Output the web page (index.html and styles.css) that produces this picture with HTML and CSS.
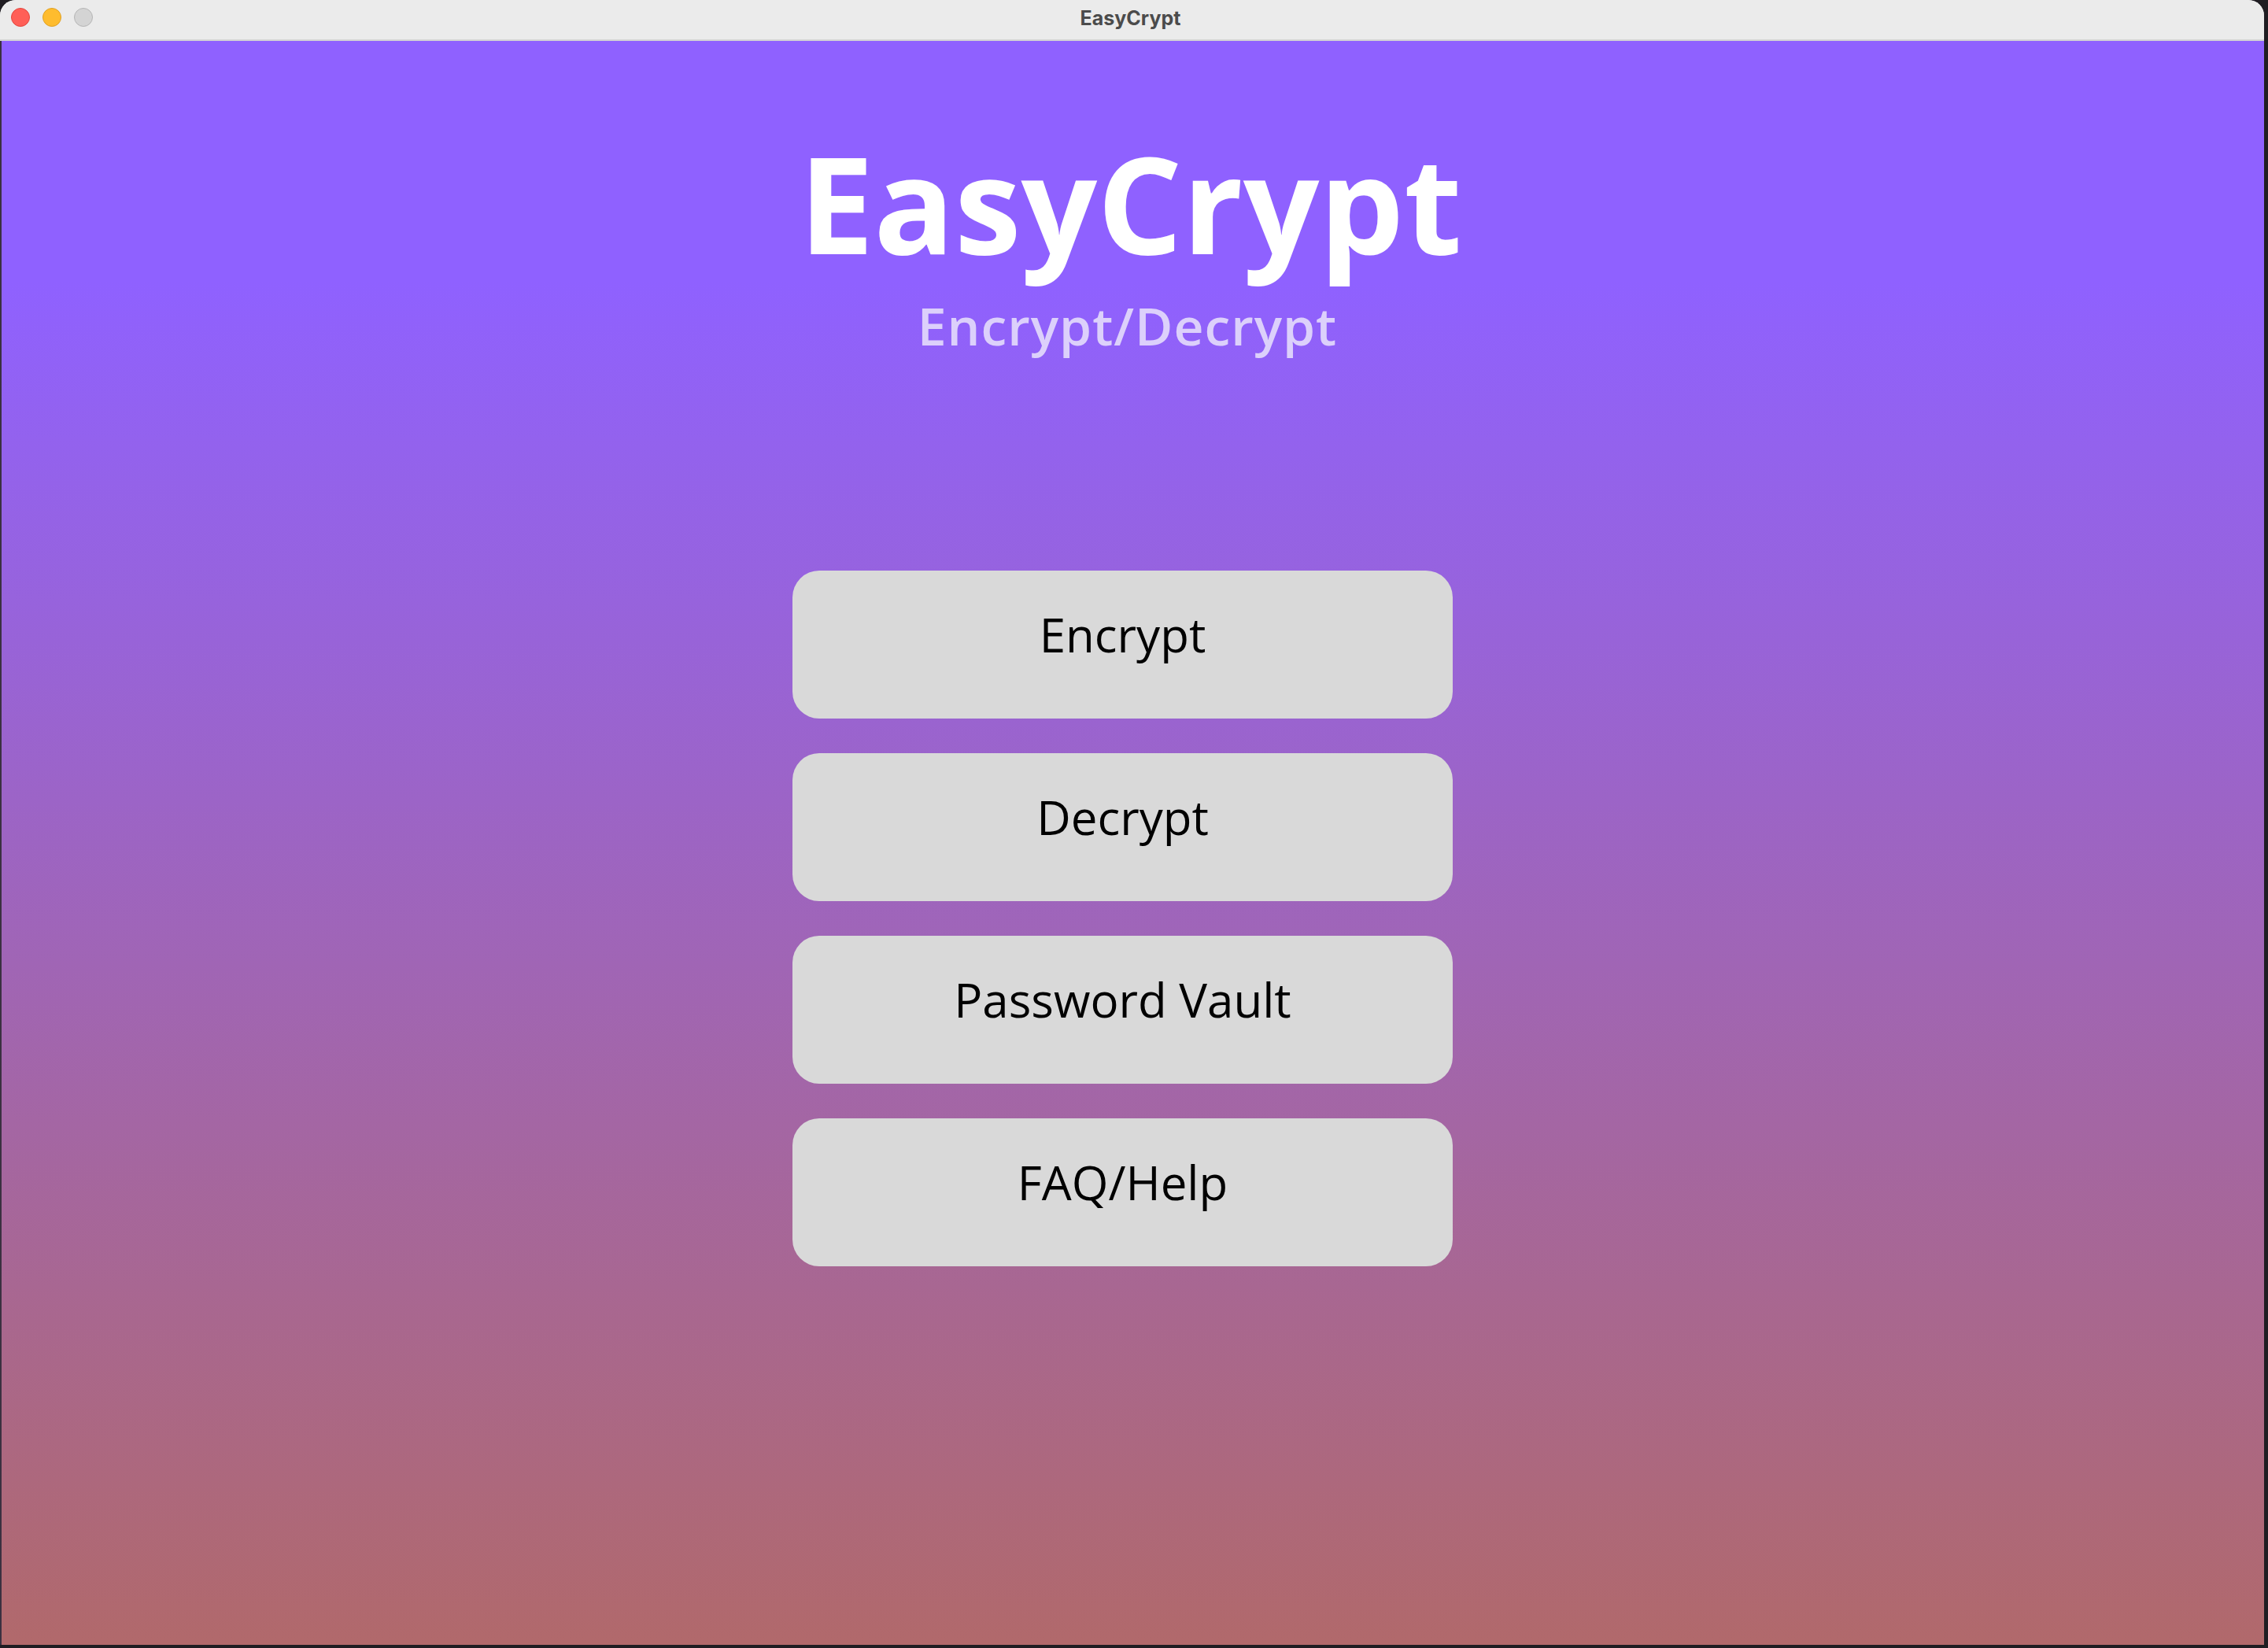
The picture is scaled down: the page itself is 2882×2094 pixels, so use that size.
FILE: index.html
```html
<!DOCTYPE html>
<html lang="en">
<head>
<meta charset="utf-8">
<title>EasyCrypt</title>
<link rel="stylesheet" href="styles.css">
</head>
<body>
<div class="window">
  <header class="titlebar">
    <div class="lights">
      <span class="light red"></span>
      <span class="light yellow"></span>
      <span class="light gray"></span>
    </div>
    <div class="wintitle">EasyCrypt</div>
  </header>
  <main class="content">
    <h1 class="title">EasyCrypt</h1>
    <p class="subtitle">Encrypt/Decrypt</p>
    <nav class="menu">
      <button class="btn">Encrypt</button>
      <button class="btn">Decrypt</button>
      <button class="btn">Password Vault</button>
      <button class="btn">FAQ/Help</button>
    </nav>
  </main>
</div>
</body>
</html>
```

FILE: styles.css
```css
html, body {
  margin: 0;
  padding: 0;
  background: #1f1d22;
  overflow: hidden;
}

.window {
  width: 2877px;
  height: 2090px;
  border-radius: 20px 20px 0 0;
  overflow: hidden;
  display: flex;
  flex-direction: column;
  background: #ebebeb;
}

.titlebar {
  position: relative;
  height: 50px;
  flex: 0 0 50px;
  background: #ebebeb;
  border-bottom: 2px solid #d4d4d4;
  display: flex;
  align-items: center;
  justify-content: center;
}

.lights {
  position: absolute;
  left: 14px;
  top: 10px;
  display: flex;
  gap: 16px;
}

.light {
  width: 22px;
  height: 22px;
  border-radius: 50%;
  display: block;
}
.light.red { background: #ff5f57; border: 1px solid #e2463f; }
.light.yellow { background: #febc2e; border: 1px solid #dfa025; }
.light.gray { background: #d4d4d4; border: 1px solid #b5b5b5; }

.wintitle {
  font-family: Inter, "Liberation Sans", sans-serif;
  font-weight: 700;
  font-size: 25px;
  color: #4b4b4b;
  margin-left: -4px;
  margin-top: -4px;
}

.content {
  flex: 1;
  border-left: 2px solid #3a3040;
  background: linear-gradient(180deg, #8f61ff 0%, #8f61ff 15%, #b1696b 100%);
  display: flex;
  flex-direction: column;
  align-items: center;
  padding-top: 105px;
  font-family: "Open Sans", "Noto Sans", sans-serif;
}

.title {
  margin: 0 0 0 -6px;
  font-size: 170px;
  line-height: 200px;
  font-weight: 700;
  color: #ffffff;
  letter-spacing: 0;
}

.subtitle {
  margin: 16px 0 0 -14px;
  font-size: 66px;
  line-height: 80px;
  font-weight: 600;
  letter-spacing: 1px;
  color: #dcd0fb;
}

.menu {
  margin-top: 272px;
  margin-right: 26px;
  display: flex;
  flex-direction: column;
  gap: 44px;
}

.btn {
  width: 839px;
  height: 188px;
  box-sizing: border-box;
  padding: 41px 0 0;
  border: none;
  border-radius: 34px;
  background: #d9d9d9;
  color: #000000;
  font-family: "Open Sans", "Noto Sans", sans-serif;
  font-size: 60px;
  line-height: 80px;
  font-weight: 400;
  text-align: center;
  display: flex;
  justify-content: center;
  align-items: flex-start;
}
```
